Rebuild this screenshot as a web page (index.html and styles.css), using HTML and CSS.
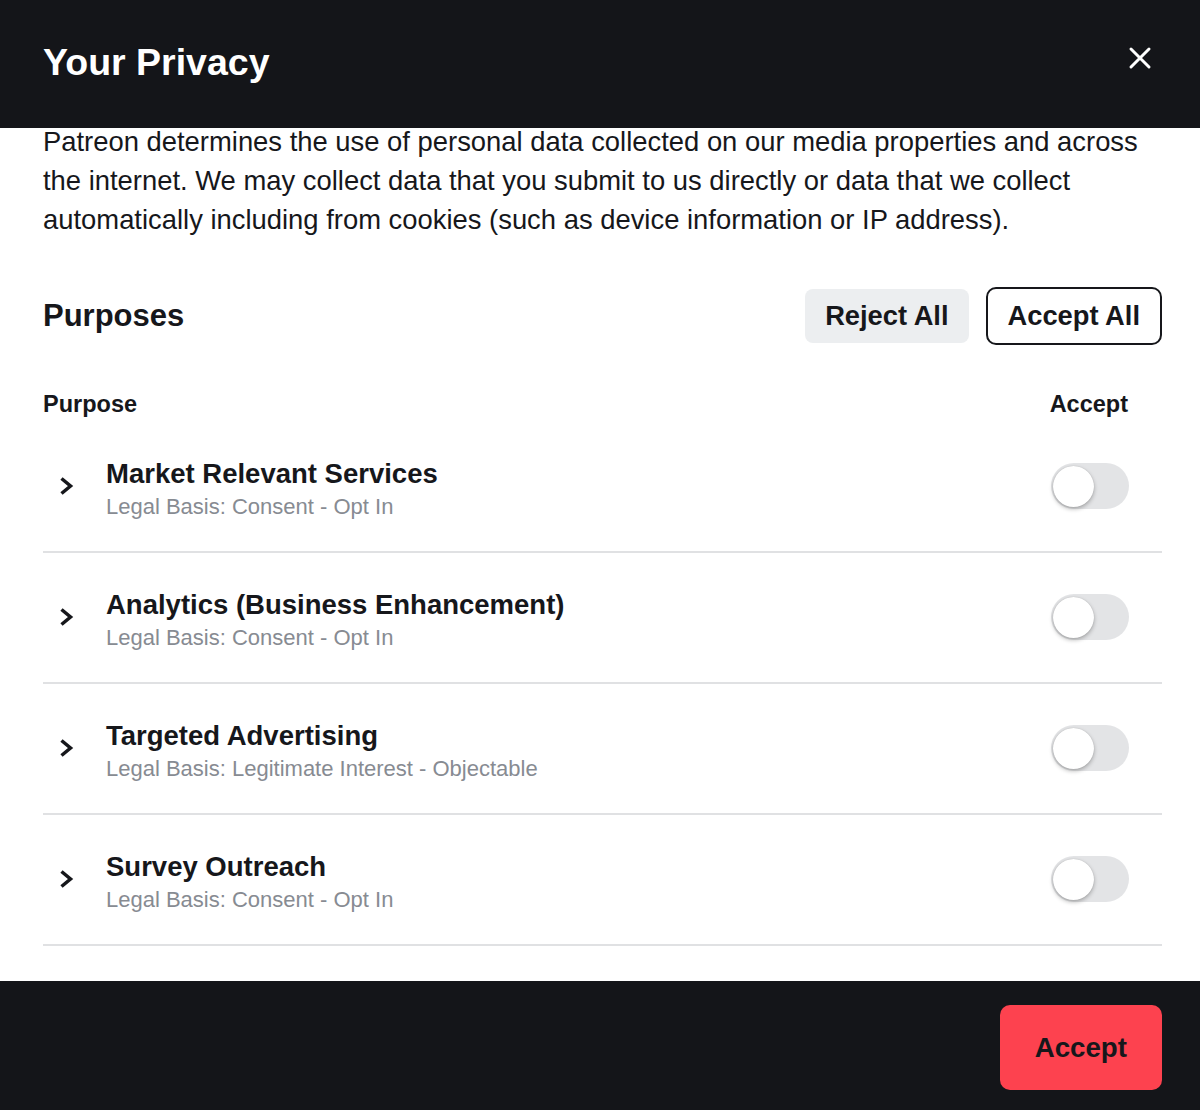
FILE: index.html
```html
<!DOCTYPE html>
<html lang="en">
<head>
<meta charset="utf-8">
<title>Your Privacy</title>
<link rel="stylesheet" href="styles.css">
</head>
<body>
<div class="modal">
  <header class="modal-header">
    <h1 class="modal-title">Your Privacy</h1>
    <button class="close-btn" aria-label="Close">
      <svg width="24" height="24" viewBox="0 0 24 24"><path d="M3 3L21 21M21 3L3 21" stroke="#fff" stroke-width="3" stroke-linecap="round" fill="none"/></svg>
    </button>
  </header>
  <main class="modal-body">
    <p class="intro">Patreon determines the use of personal data collected on our media properties and across the internet. We may collect data that you submit to us directly or data that we collect automatically including from cookies (such as device information or IP address).</p>
    <div class="purposes-head">
      <h2 class="purposes-title">Purposes</h2>
      <div class="bulk-actions">
        <button class="btn btn-reject">Reject All</button>
        <button class="btn btn-accept-all">Accept All</button>
      </div>
    </div>
    <div class="col-head">
      <span>Purpose</span>
      <span>Accept</span>
    </div>
    <ul class="purpose-list">
      <li class="purpose-row">
        <span class="chev"><svg width="24" height="24" viewBox="0 0 24 24"><path d="M7.5 4.5L16.5 12L7.5 19.5" stroke="#16171b" stroke-width="3.5" fill="none" stroke-linejoin="miter"/></svg></span>
        <div class="purpose-text">
          <div class="purpose-name">Market Relevant Services</div>
          <div class="purpose-basis">Legal Basis: Consent - Opt In</div>
        </div>
        <span class="toggle"><span class="knob"></span></span>
      </li>
      <li class="purpose-row">
        <span class="chev"><svg width="24" height="24" viewBox="0 0 24 24"><path d="M7.5 4.5L16.5 12L7.5 19.5" stroke="#16171b" stroke-width="3.5" fill="none" stroke-linejoin="miter"/></svg></span>
        <div class="purpose-text">
          <div class="purpose-name">Analytics (Business Enhancement)</div>
          <div class="purpose-basis">Legal Basis: Consent - Opt In</div>
        </div>
        <span class="toggle"><span class="knob"></span></span>
      </li>
      <li class="purpose-row">
        <span class="chev"><svg width="24" height="24" viewBox="0 0 24 24"><path d="M7.5 4.5L16.5 12L7.5 19.5" stroke="#16171b" stroke-width="3.5" fill="none" stroke-linejoin="miter"/></svg></span>
        <div class="purpose-text">
          <div class="purpose-name">Targeted Advertising</div>
          <div class="purpose-basis">Legal Basis: Legitimate Interest - Objectable</div>
        </div>
        <span class="toggle"><span class="knob"></span></span>
      </li>
      <li class="purpose-row">
        <span class="chev"><svg width="24" height="24" viewBox="0 0 24 24"><path d="M7.5 4.5L16.5 12L7.5 19.5" stroke="#16171b" stroke-width="3.5" fill="none" stroke-linejoin="miter"/></svg></span>
        <div class="purpose-text">
          <div class="purpose-name">Survey Outreach</div>
          <div class="purpose-basis">Legal Basis: Consent - Opt In</div>
        </div>
        <span class="toggle"><span class="knob"></span></span>
      </li>
    </ul>
  </main>
  <footer class="modal-footer">
    <button class="btn btn-accept">Accept</button>
  </footer>
</div>
</body>
</html>
```
FILE: styles.css
```css
* { box-sizing: border-box; }
html, body {
  margin: 0;
  padding: 0;
  height: 1110px;
  overflow: hidden;
  background: #ffffff;
}
body {
  font-family: "Liberation Sans", Arial, Helvetica, sans-serif;
  color: #16171b;
}
.modal {
  display: flex;
  flex-direction: column;
  height: 1110px;
}
.modal-header {
  height: 128px;
  flex: none;
  background: #141519;
  display: flex;
  justify-content: space-between;
  align-items: flex-start;
  padding: 40px 48px 0 43px;
}
.modal-title {
  margin: 0;
  font-size: 37.5px;
  line-height: 44px;
  font-weight: 700;
  color: #ffffff;
}
.close-btn {
  margin-top: 6px;
  padding: 0;
  border: 0;
  background: none;
  width: 24px;
  height: 24px;
  display: block;
}
.close-btn svg { display: block; }
.modal-body {
  flex: 1;
  padding: 0 38px 0 43px;
}
.intro {
  margin: -6px 0 0;
  font-size: 27.4px;
  line-height: 39px;
  color: #16171b;
}
.purposes-head {
  margin-top: 48px;
  height: 58px;
  display: flex;
  align-items: center;
  justify-content: space-between;
}
.purposes-title {
  margin: 0;
  font-size: 31px;
  font-weight: 700;
  line-height: 36px;
}
.bulk-actions {
  display: flex;
  align-items: center;
  gap: 17px;
}
.btn {
  font-family: inherit;
  font-weight: 700;
  font-size: 27.3px;
  color: #16171b;
  cursor: pointer;
}
.btn-reject {
  height: 54px;
  padding: 0 20px;
  background: #eceef0;
  border: 0;
  border-radius: 8px;
}
.btn-accept-all {
  height: 58px;
  padding: 0 20px;
  background: #ffffff;
  border: 2px solid #16171b;
  border-radius: 10px;
}
.col-head {
  margin-top: 44px;
  margin-bottom: 3px;
  display: flex;
  justify-content: space-between;
  padding-right: 34px;
  font-size: 23.5px;
  font-weight: 700;
  line-height: 30px;
}
.purpose-list {
  list-style: none;
  margin: 0;
  padding: 0;
}
.purpose-row {
  display: flex;
  align-items: center;
  padding: 35px 0 28px;
  border-bottom: 2px solid #e0e1e3;
}
.chev {
  flex: none;
  width: 63px;
  padding-left: 11px;
  display: flex;
  align-items: center;
  margin-bottom: 8px;
}
.chev svg { display: block; }
.purpose-text {
  flex: 1;
}
.purpose-name {
  font-size: 27.5px;
  font-weight: 700;
  line-height: 34px;
}
.purpose-basis {
  font-size: 22px;
  line-height: 32px;
  color: #878b92;
}
.toggle {
  flex: none;
  width: 78px;
  height: 46px;
  margin-right: 33px;
  margin-bottom: 8px;
  border-radius: 23px;
  background: #e3e4e6;
  display: flex;
  align-items: center;
  padding-left: 2px;
}
.knob {
  width: 41px;
  height: 41px;
  border-radius: 50%;
  background: #ffffff;
  box-shadow: 0 2px 4px rgba(0,0,0,0.28), 0 0 1px rgba(0,0,0,0.2);
}
.modal-footer {
  flex: none;
  height: 129px;
  background: #141519;
  display: flex;
  justify-content: flex-end;
  align-items: flex-start;
  padding: 24px 38px 0 0;
}
.btn-accept {
  height: 85px;
  padding: 0 35px;
  border: 0;
  border-radius: 10px;
  background: #fd424f;
  color: #16171b;
  font-size: 27.7px;
}
```
